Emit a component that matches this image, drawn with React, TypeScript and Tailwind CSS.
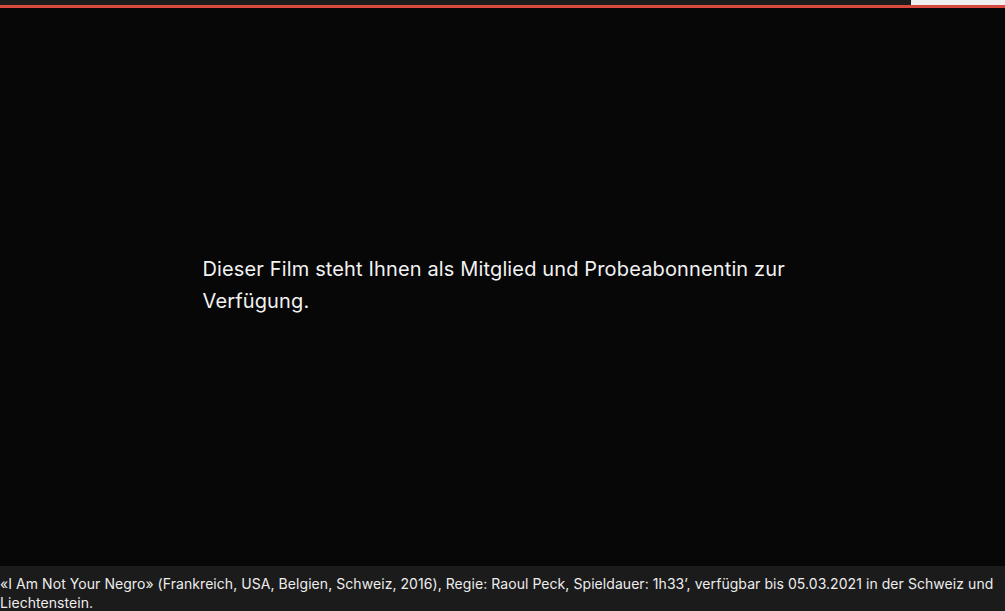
export default function App() {
  return (
    <div
      className="flex h-[611px] w-[1005px] flex-col overflow-hidden bg-[#070707] text-[#f2f2f2]"
      style={{ fontFamily: "Inter, 'Liberation Sans', sans-serif" }}
    >
      <div className="flex h-[5px] shrink-0">
        <div className="w-[911px] bg-[#1c1c1c]" />
        <div className="flex-1 bg-[#efefef]" />
      </div>
      <div className="h-[3px] shrink-0 bg-[#d9493f]" />

      <div className="flex flex-1 items-center justify-center pb-[4px]">
        <p className="w-[600px] text-[20px] leading-[32px] tracking-[0.14px]">
          Dieser Film steht Ihnen als Mitglied und Probeabonnentin zur
          Verfügung.
        </p>
      </div>

      <div className="h-[45px] shrink-0 bg-[#1b1b1b] pt-[8px] text-[14px] leading-[19px] tracking-[0.06px] text-[#ededed]">
        «I Am Not Your Negro» (Frankreich, USA, Belgien, Schweiz, 2016), Regie:
        Raoul Peck, Spieldauer: 1h33’, verfügbar bis 05.03.2021 in der Schweiz
        und Liechtenstein.
      </div>
    </div>
  );
}
